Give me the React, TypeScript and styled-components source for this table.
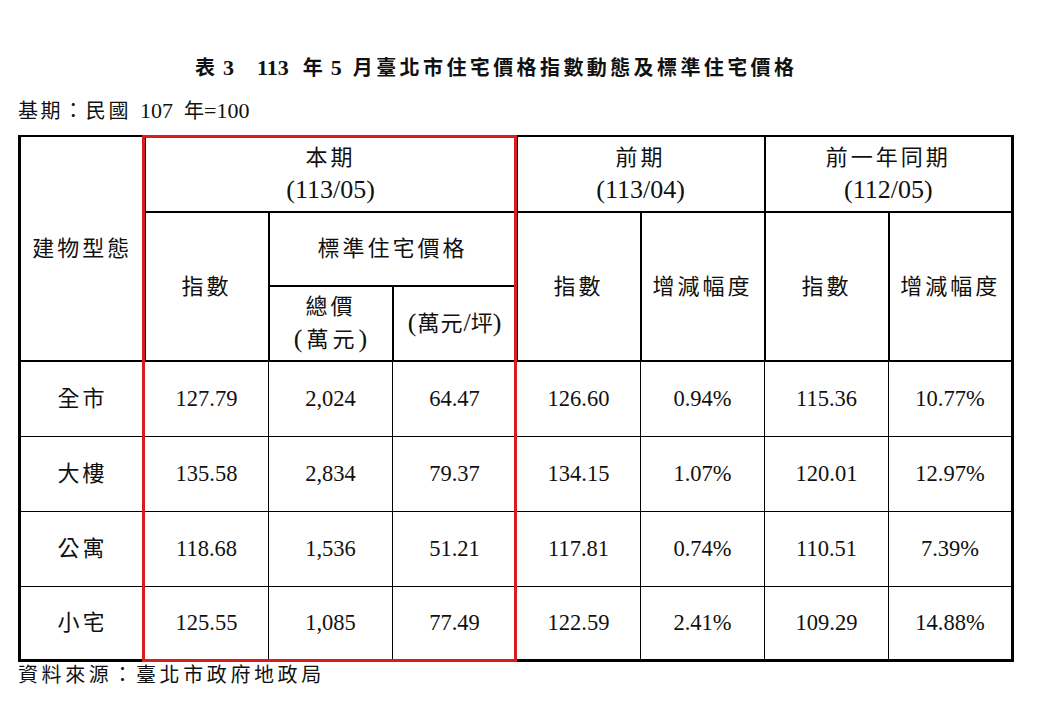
import React from 'react'
import styled, { createGlobalStyle } from 'styled-components'

const GlobalStyle = createGlobalStyle`
  html, body {
    margin: 0;
    padding: 0;
    background: #ffffff;
  }
  body {
    font-family: "Liberation Serif", "Noto Sans CJK TC", serif;
    color: #111111;
  }
`

type Row = {
  type: string
  index: string
  total: string
  unit: string
  prevIndex: string
  prevRate: string
  yearIndex: string
  yearRate: string
}

const rows: Row[] = [
  { type: '全市', index: '127.79', total: '2,024', unit: '64.47', prevIndex: '126.60', prevRate: '0.94%', yearIndex: '115.36', yearRate: '10.77%' },
  { type: '大樓', index: '135.58', total: '2,834', unit: '79.37', prevIndex: '134.15', prevRate: '1.07%', yearIndex: '120.01', yearRate: '12.97%' },
  { type: '公寓', index: '118.68', total: '1,536', unit: '51.21', prevIndex: '117.81', prevRate: '0.74%', yearIndex: '110.51', yearRate: '7.39%' },
  { type: '小宅', index: '125.55', total: '1,085', unit: '77.49', prevIndex: '122.59', prevRate: '2.41%', yearIndex: '109.29', yearRate: '14.88%' },
]

function App() {
  return (
    <>
      <GlobalStyle />
      <Page>
        <Title>
          <Cjk $space={2}>表</Cjk>
          <Lat $l={6} $r={23}>3</Lat>
          <Lat $r={14}>113</Lat>
          <Cjk $space={0}>年</Cjk>
          <Lat $l={8} $r={11}>5</Lat>
          <Cjk $space={3.4}>月臺北市住宅價格指數動態及標準住宅價格</Cjk>
        </Title>
        <Base>
          <Cjk $space={2.6}>基期：民國</Cjk>
          <Lat $l={9} $r={11}>107</Lat>
          <Cjk $space={0}>年</Cjk>
          <Lat>=100</Lat>
        </Base>
        <TableWrap>
          <Table>
            <colgroup>
              <col style={{ width: 125 }} />
              {Array.from({ length: 7 }).map((_, i) => (
                <col key={i} style={{ width: 124 }} />
              ))}
            </colgroup>
            <thead>
              <HeadRow $h={76}>
                <Th rowSpan={3}>
                  <Cjk>建物型態</Cjk>
                </Th>
                <Th colSpan={3}>
                  <Cjk>本期</Cjk>
                  <br />
                  <Paren>(113/05)</Paren>
                </Th>
                <Th colSpan={2}>
                  <Cjk>前期</Cjk>
                  <br />
                  <Paren>(113/04)</Paren>
                </Th>
                <Th colSpan={2}>
                  <Cjk>前一年同期</Cjk>
                  <br />
                  <Paren>(112/05)</Paren>
                </Th>
              </HeadRow>
              <HeadRow $h={74}>
                <Th rowSpan={2}>
                  <Cjk>指數</Cjk>
                </Th>
                <Th colSpan={2}>
                  <Cjk>標準住宅價格</Cjk>
                </Th>
                <Th rowSpan={2}>
                  <Cjk>指數</Cjk>
                </Th>
                <Th rowSpan={2}>
                  <Cjk>增減幅度</Cjk>
                </Th>
                <Th rowSpan={2}>
                  <Cjk>指數</Cjk>
                </Th>
                <Th rowSpan={2}>
                  <Cjk>增減幅度</Cjk>
                </Th>
              </HeadRow>
              <HeadRow $h={75}>
                <Th>
                  <Cjk>總價</Cjk>
                  <br />
                  <Paren>(</Paren>
                  <Cjk $space={4} $trim>萬元</Cjk>
                  <Paren>)</Paren>
                </Th>
                <Th>
                  <Paren>(</Paren>
                  <Cjk $space={1} $trim>萬元</Cjk>
                  <Paren>/</Paren>
                  <Cjk $space={0}>坪</Cjk>
                  <Paren>)</Paren>
                </Th>
              </HeadRow>
            </thead>
            <tbody>
              {rows.map((r, i) => (
                <DataRow key={r.type} $h={i === rows.length - 1 ? 74 : 75}>
                  <Td>
                    <Cjk>{r.type}</Cjk>
                  </Td>
                  <Td>{r.index}</Td>
                  <Td>{r.total}</Td>
                  <Td>{r.unit}</Td>
                  <Td>{r.prevIndex}</Td>
                  <Td>{r.prevRate}</Td>
                  <Td>{r.yearIndex}</Td>
                  <Td>{r.yearRate}</Td>
                </DataRow>
              ))}
            </tbody>
          </Table>
          <Highlight />
        </TableWrap>
        <Source>
          <Cjk $space={3.6}>資料來源：臺北市政府地政局</Cjk>
        </Source>
      </Page>
    </>
  )
}

export default App

const Page = styled.div`
  width: 995px;
  padding: 54px 0 0 18px;
`

// CJK runs get wider tracking, as in the printed report
const Cjk = styled.span<{ $space?: number; $trim?: boolean }>`
  letter-spacing: ${(p) => p.$space ?? 3}px;
  ${(p) => (p.$trim ? `padding-left: ${p.$space ?? 3}px;` : '')}
`

const Lat = styled.span<{ $l?: number; $r?: number }>`
  margin-left: ${(p) => p.$l ?? 0}px;
  margin-right: ${(p) => p.$r ?? 0}px;
`

const Paren = styled.span`
  font-size: 26px;
`

const Title = styled.h1`
  margin: 0;
  padding-left: 177px;
  font-size: 20px;
  font-weight: bold;
  line-height: 28px;
  white-space: nowrap;

  ${Lat} {
    font-size: 22px;
  }
`

const Base = styled.div`
  margin-top: 15px;
  font-size: 20px;
  line-height: 28px;
  white-space: nowrap;

  ${Lat} {
    font-size: 22px;
  }
`

const TableWrap = styled.div`
  position: relative;
  margin-top: 10px;
  width: 995px;
`

const Table = styled.table`
  width: 995px;
  table-layout: fixed;
  border-collapse: collapse;
  border-top: 2px solid #000;
  border-left: 3px solid #000;
  border-right: 3px solid #000;
  border-bottom: 3px solid #000;
  font-size: 22px;
`

const HeadRow = styled.tr<{ $h: number }>`
  height: ${(p) => p.$h}px;
`

const DataRow = styled.tr<{ $h: number }>`
  height: ${(p) => p.$h}px;
`

const Th = styled.th`
  padding: 0;
  border: 2px solid #000;
  font-weight: normal;
  line-height: 32px;
  text-align: center;
  vertical-align: middle;
  white-space: nowrap;
`

const Td = styled.td`
  padding: 0;
  border: 1px solid #000;
  font-size: 22.5px;
  line-height: 30px;
  text-align: center;
  vertical-align: middle;
  white-space: nowrap;

  ${Cjk} {
    font-size: 22px;
  }
`

const Highlight = styled.div`
  position: absolute;
  left: 124px;
  top: 0;
  bottom: 0;
  width: 375px;
  border: 3px solid #d91c1c;
  box-sizing: border-box;
  pointer-events: none;
`

const Source = styled.div`
  font-size: 20px;
  line-height: 26px;
  white-space: nowrap;
`
